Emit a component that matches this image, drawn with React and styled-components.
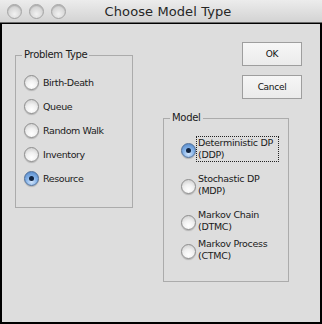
import React, { useState } from "react";
import styled, { createGlobalStyle } from "styled-components";

const GlobalStyle = createGlobalStyle`
  html, body {
    margin: 0;
    padding: 0;
    background: #000;
  }
  body {
    font-family: "DejaVu Sans", "Liberation Sans", sans-serif;
  }
`;

const problemTypes = ["Birth-Death", "Queue", "Random Walk", "Inventory", "Resource"];

const models = [
  { id: "ddp", lines: ["Deterministic DP", "(DDP)"], gap: 0 },
  { id: "mdp", lines: ["Stochastic DP", "(MDP)"], gap: 12 },
  { id: "dtmc", lines: ["Markov Chain", "(DTMC)"], gap: 12 },
  { id: "ctmc", lines: ["Markov Process", "(CTMC)"], gap: 5 },
];

function Radio({ checked }) {
  return <RadioDot $checked={checked} />;
}

export default function App() {
  const [problem, setProblem] = useState("Resource");
  const [model, setModel] = useState("ddp");

  return (
    <Window>
      <GlobalStyle />
      <TitleBar>
        <Lights>
          <Light />
          <Light />
          <Light />
        </Lights>
        <Title>Choose Model Type</Title>
      </TitleBar>
      <Body>
        <LeftColumn>
          <Group $width={118} $padTop={9} $padBottom={17}>
            <Legend>Problem Type</Legend>
            {problemTypes.map((p) => (
              <ProblemRow key={p} onClick={() => setProblem(p)}>
                <Radio checked={problem === p} />
                <ProblemLabel>{p}</ProblemLabel>
              </ProblemRow>
            ))}
          </Group>
        </LeftColumn>
        <RightColumn>
          <Button>OK</Button>
          <Button>Cancel</Button>
          <Group $width={126} $padTop={14} $padBottom={18} $marginTop={4}>
            <Legend>Model</Legend>
            {models.map((m) => (
              <ModelRow key={m.id} $gap={m.gap} onClick={() => setModel(m.id)}>
                <Radio checked={model === m.id} />
                <ModelLabel $focused={model === m.id}>
                  {m.lines.map((l) => (
                    <span key={l}>{l}</span>
                  ))}
                </ModelLabel>
              </ModelRow>
            ))}
          </Group>
        </RightColumn>
      </Body>
    </Window>
  );
}

const Window = styled.div`
  width: 322px;
  height: 324px;
  display: flex;
  flex-direction: column;
  background: #000;
`;

const TitleBar = styled.div`
  height: 22px;
  flex: none;
  display: flex;
  align-items: center;
  background: linear-gradient(#ececec, #d3d3d3);
  border-bottom: 1px solid #6a6a6a;
`;

const Lights = styled.div`
  display: flex;
  gap: 7px;
  padding-left: 7px;
`;

const Light = styled.span`
  width: 13px;
  height: 13px;
  border-radius: 50%;
  border: 1px solid #a4a4a4;
  background: radial-gradient(circle at 50% 70%, #f2f2f2 0%, #d6d6d6 60%, #bdbdbd 100%);
  box-shadow: inset 0 1px 1px rgba(0, 0, 0, 0.15);
`;

const Title = styled.div`
  flex: 1;
  text-align: center;
  padding-right: 52px;
  font-size: 13px;
  color: #262626;
  letter-spacing: 0.1px;
`;

const Body = styled.div`
  flex: 1;
  margin: 1px 2px 2px;
  background: #dddddd;
  display: flex;
  gap: 30px;
  padding: 0 18px 0 13px;
  font-size: 9px;
  color: #1a1a1a;
`;

const LeftColumn = styled.div`
  padding-top: 25px;
`;

const RightColumn = styled.div`
  flex: 1;
  display: flex;
  flex-direction: column;
  align-items: flex-end;
  padding-top: 18px;
  gap: 9px;
`;

const Button = styled.button`
  width: 60px;
  height: 24px;
  border: 1px solid #9e9e9e;
  background: linear-gradient(#f6f6f6, #ebebeb);
  font-family: "DejaVu Sans", "Liberation Sans", sans-serif;
  font-size: 9px;
  letter-spacing: -0.3px;
  color: #111;
  padding: 0;
  border-radius: 0;
`;

const Group = styled.fieldset`
  box-sizing: border-box;
  width: ${(p) => p.$width}px;
  margin: ${(p) => p.$marginTop || 0}px 0 0 0;
  align-self: flex-start;
  border: 1px solid #ababab;
  padding: ${(p) => p.$padTop}px 8px ${(p) => p.$padBottom}px;
  display: flex;
  flex-direction: column;
`;

const Legend = styled.legend`
  padding: 0 2px;
  margin-left: -2px;
  line-height: 12px;
  font-size: 10px;
  letter-spacing: -0.3px;
  color: #1a1a1a;
`;

const RadioDot = styled.span`
  position: relative;
  flex: none;
  box-sizing: border-box;
  width: 15px;
  height: 15px;
  border-radius: 50%;
  border: 1px solid ${(p) => (p.$checked ? "#4f6f99" : "#8e8e8e")};
  background: ${(p) =>
    p.$checked
      ? "radial-gradient(circle at 50% 75%, #d4e6fb 0%, #86b3e8 45%, #4a7fc2 100%)"
      : "radial-gradient(circle at 50% 75%, #ffffff 0%, #f0f0f0 45%, #c6c6c6 100%)"};
  box-shadow: 0 1px 1px rgba(0, 0, 0, 0.2);

  &::after {
    content: "";
    display: ${(p) => (p.$checked ? "block" : "none")};
    position: absolute;
    left: 4px;
    top: 4px;
    width: 5px;
    height: 5px;
    border-radius: 50%;
    background: #10233f;
  }
`;

const ProblemRow = styled.div`
  height: 24px;
  display: flex;
  align-items: center;
  gap: 4px;
`;

const ProblemLabel = styled.span`
  font-size: 9.5px;
  letter-spacing: -0.4px;
`;

const ModelRow = styled.div`
  display: flex;
  align-items: center;
  margin-top: ${(p) => p.$gap}px;
  padding-left: 9px;
  gap: 0;
`;

const ModelLabel = styled.span`
  display: flex;
  flex-direction: column;
  line-height: 12px;
  font-size: 9.5px;
  letter-spacing: -0.3px;
  padding: 0 5px 0 1px;
  margin-top: -2px;
  border: 1px dotted ${(p) => (p.$focused ? "#222" : "transparent")};
`;
